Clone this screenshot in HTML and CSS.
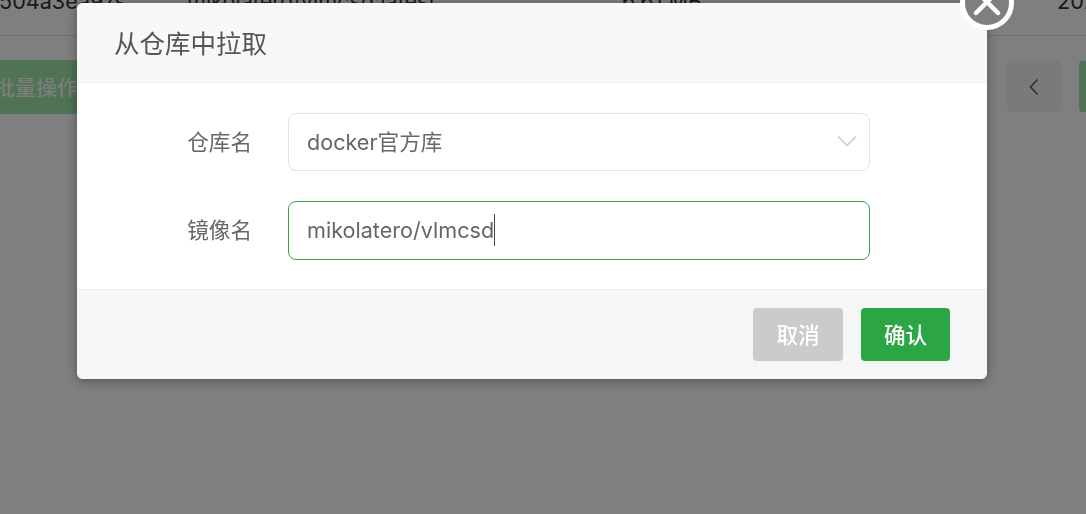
FILE: index.html
```html
<!DOCTYPE html>
<html lang="en">
<head>
  <meta charset="UTF-8" />
  <title>从仓库中拉取</title>
  <link rel="stylesheet" href="styles.css">
</head>
<body>

<div class="page">
  <div class="row">
    <span class="cell-id">504a3ea97s</span>
    <span class="cell-name">mikolatero/vlmcsd:latest</span>
    <span class="cell-size">6.61 MB</span>
    <span class="cell-date">2020</span>
  </div>
  <div class="toolbar">
    <button class="batch"><span>批量操作</span></button>
    <div class="pager">
      <div class="prev">
        <svg width="12" height="18" viewBox="0 0 12 18"><path d="M9.5 1.5 2.5 9l7 7.5" fill="none" stroke="#5e5e5e" stroke-width="1.6"/></svg>
      </div>
      <div class="next"></div>
    </div>
  </div>
</div>

<div class="mask"></div>

<div class="dialog">
  <div class="dialog-head">从仓库中拉取</div>
  <div class="dialog-body">
    <div class="field">
      <label>仓库名</label>
      <div class="control">
        <span>docker官方库</span>
        <svg class="arrow" width="20" height="12" viewBox="0 0 20 12"><path d="M1 1.5l9 9 9-9" fill="none" stroke="#c9c9c9" stroke-width="1.5"/></svg>
      </div>
    </div>
    <div class="field">
      <label>镜像名</label>
      <div class="control active"><span>mikolatero/vlmcsd</span><i class="caret"></i></div>
    </div>
  </div>
  <div class="dialog-foot">
    <button class="btn cancel">取消</button>
    <button class="btn ok">确认</button>
  </div>
  <div class="close">
    <svg width="44" height="44" viewBox="0 0 44 44"><path d="M11 10l22 22M33 10 11 32" stroke="#fff" stroke-width="4.5" stroke-linecap="round"/></svg>
  </div>
</div>

</body>
</html>
```

FILE: styles.css
```css
html, body {
  margin: 0;
  padding: 0;
  height: 100%;
  overflow: hidden;
  background: #fff;
  font-family: "Inter", "Noto Sans CJK SC", sans-serif;
  color: #333;
}
.page {
  margin-top: -13px;
}
.row {
  display: flex;
  height: 48px;
  border-bottom: 1px solid #ddd;
  font-size: 21.6px;
  line-height: 28px;
  white-space: nowrap;
}
.row span { flex: none; }
.cell-id { width: 188px; margin-left: -1px; }
.cell-name { width: 435px; }
.cell-size { width: 435px; }
.toolbar {
  display: flex;
  justify-content: space-between;
  margin-top: 24px;
}
.batch {
  width: 78px;
  height: 54px;
  border: 0;
  padding: 0 0 2px 0;
  border-radius: 0 4px 4px 0;
  background: #a0e6aa;
  color: #fff;
  font: 400 21px "Noto Sans CJK SC", sans-serif;
  text-align: left;
  white-space: nowrap;
  overflow: hidden;
}
.batch span { margin-left: -6px; }
.pager {
  display: flex;
  gap: 18px;
  margin-top: 1px;
}
.prev {
  width: 54px;
  height: 51px;
  border-radius: 4px;
  background: #f5f5f5;
  display: flex;
  align-items: center;
  justify-content: center;
}
.next {
  width: 7px;
  height: 51px;
  border-radius: 4px 0 0 4px;
  background: #a0e6aa;
}
.mask {
  position: fixed;
  top: 0; left: 0;
  width: 100%; height: 100%;
  background: rgba(0, 0, 0, 0.5);
}
.dialog {
  position: fixed;
  top: 3px;
  left: 77px;
  width: 910px;
  border-radius: 6px;
  background: #fff;
  box-shadow: 0 2px 12px rgba(0, 0, 0, 0.35);
}
.dialog-head {
  height: 80px;
  box-sizing: border-box;
  padding-left: 37px;
  border-bottom: 1px solid #eee;
  border-radius: 6px 6px 0 0;
  background: #f8f8f8;
  color: #555;
  font: 400 25.5px/78px "Noto Sans CJK SC", sans-serif;
}
.dialog-body {
  padding: 30px 117px 29px 0;
  height: 147px;
}
.field {
  display: flex;
  align-items: center;
  margin-bottom: 30px;
}
.field label {
  width: 175px;
  text-align: right;
  margin-right: 36px;
  padding-bottom: 4px;
  color: #666;
  font: 400 21.6px "Noto Sans CJK SC", sans-serif;
}
.control {
  flex: 1;
  height: 58px;
  box-sizing: border-box;
  display: flex;
  align-items: center;
  padding: 0 0 4px 18px;
  border: 1px solid #e2e2e8;
  border-radius: 8px;
  color: #666;
  font-size: 21.6px;
  position: relative;
}
.control.active {
  height: 59px;
  padding-bottom: 2px;
  border-color: #3a9f52;
}
.caret {
  width: 1px;
  height: 32px;
  background: #444;
}
.arrow {
  position: absolute;
  right: 12px;
  top: 21px;
}
.dialog-foot {
  display: flex;
  justify-content: flex-end;
  gap: 18px;
  height: 90px;
  box-sizing: border-box;
  padding: 18px 37px 0 0;
  border-top: 1px solid #eee;
  border-radius: 0 0 6px 6px;
  background: #f5f7f7;
}
.btn {
  width: 90px;
  height: 53px;
  border: 0;
  padding-bottom: 4px;
  border-radius: 4px;
  color: #fff;
  font: 500 21.6px "Noto Sans CJK SC", sans-serif;
}
.cancel { background: #cbcbcb; }
.ok { width: 89px; background: #2ca545; }
.close {
  position: absolute;
  top: -27px;
  right: -27px;
  width: 44px;
  height: 44px;
  padding: 0;
  border: 5px solid #fff;
  border-radius: 50%;
  background: #7f7f7f;
}
.close svg { display: block; }
```
